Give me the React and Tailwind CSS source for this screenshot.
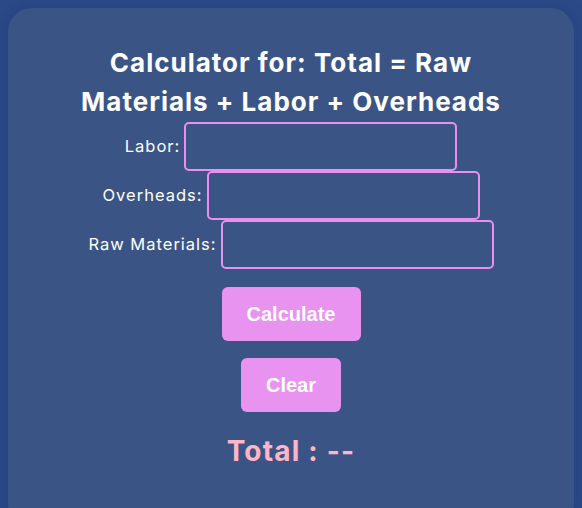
import React from 'react';

const fields = [
    { name: 'labor', label: 'Labor:' },
    { name: 'overheads', label: 'Overheads:' },
    { name: 'rawMaterials', label: 'Raw Materials:' },
];

const App = () => {
    const [values, setValues] = React.useState({ labor: '', overheads: '', rawMaterials: '' });
    const [total, setTotal] = React.useState('--');

    const handleChange = (e) => {
        const { name, value } = e.target;
        setValues(prev => ({ ...prev, [name]: value }));
    };

    const calculate = () => {
        const sum = fields.reduce((acc, f) => acc + (parseFloat(values[f.name]) || 0), 0);
        setTotal(sum.toString());
    };

    const clear = () => {
        setValues({ labor: '', overheads: '', rawMaterials: '' });
        setTotal('--');
    };

    return (
        <div className="w-[582px] h-[508px] overflow-hidden bg-[#2c4a88] p-[8px]" style={{ fontFamily: 'Inter, "Noto Sans", sans-serif' }}>
            <div className="h-[520px] rounded-[24px] bg-[#3a5585] shadow-[0_0_10px_6px_rgba(40,70,130,0.9)] pt-[35px] flex flex-col items-center">
                <h1 className="text-[26px] font-bold text-white text-center leading-[39px] tracking-[1px]">
                    Calculator for: Total = Raw<br />Materials + Labor + Overheads
                </h1>

                <div className="mt-[1px] flex flex-col items-center">
                    {fields.map(f => (
                        <div key={f.name} className="flex items-center gap-[4px]">
                            <label className="text-[16.5px] tracking-[1px] text-white">{f.label}</label>
                            <input
                                type="number"
                                name={f.name}
                                value={values[f.name]}
                                onChange={handleChange}
                                className="w-[273px] h-[49px] rounded-[5px] border-2 border-[#e88ff0] bg-transparent text-white px-2 outline-none"
                            />
                        </div>
                    ))}
                </div>

                <button
                    onClick={calculate}
                    className="mt-[18px] w-[139px] h-[54px] rounded-[6px] bg-[#e993f1] text-white text-[20px] font-bold"
                    style={{ fontFamily: '"Liberation Sans", Arial, sans-serif' }}
                >
                    Calculate
                </button>
                <button
                    onClick={clear}
                    className="mt-[17px] w-[100px] h-[54px] rounded-[6px] bg-[#e993f1] text-white text-[20px] font-bold"
                    style={{ fontFamily: '"Liberation Sans", Arial, sans-serif' }}
                >
                    Clear
                </button>

                <div className="mt-[18px] text-[28px] font-bold tracking-[1.2px] text-[#ffb5c8]">Total : {total}</div>
            </div>
        </div>
    );
};

export default App;
